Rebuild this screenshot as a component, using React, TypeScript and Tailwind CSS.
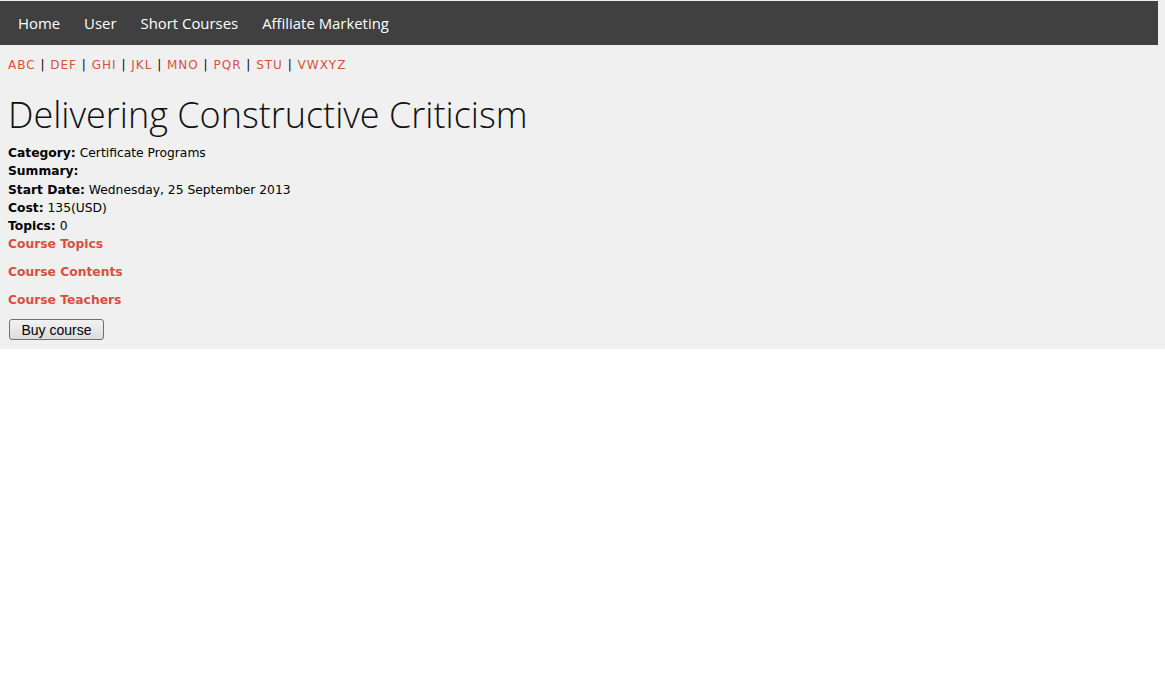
import React from 'react';

const letters = ['ABC', 'DEF', 'GHI', 'JKL', 'MNO', 'PQR', 'STU', 'VWXYZ'];
const navItems = ['Home', 'User', 'Short Courses', 'Affiliate Marketing'];

export default function App() {
  return (
    <div className="min-h-[684px] bg-white">
      <div className="bg-[#f0f0f0] pt-px pb-[9px] font-['DejaVu_Sans',Verdana,sans-serif] text-[12.3px] text-black">
        {/* top nav */}
        <nav className="mr-[7px] flex h-[44px] items-center bg-[#404040] px-[6px] font-['Open_Sans',sans-serif] text-[14.9px] text-white">
          {navItems.map((item) => (
            <a key={item} href="#" className="px-3">
              {item}
            </a>
          ))}
        </nav>

        <div className="px-2">
          {/* alphabet index */}
          <div className="mt-[11px] text-[12px] tracking-[1px] leading-[18px]">
            {letters.map((l, i) => (
              <React.Fragment key={l}>
                {i > 0 && <span> | </span>}
                <a href="#" className="text-[#d4513f]">{l}</a>
              </React.Fragment>
            ))}
          </div>

          <h1 className="mt-[16px] mb-[4px] font-['Open_Sans',sans-serif] text-[36px] font-light leading-[50px] text-[#111]">
            Delivering Constructive Criticism
          </h1>

          <div className="leading-[18.3px]">
            <div><b>Category:</b> Certificate Programs</div>
            <div><b>Summary:</b></div>
            <div><b>Start Date:</b> Wednesday, 25 September 2013</div>
            <div><b>Cost:</b> 135(USD)</div>
            <div><b>Topics:</b> 0</div>
          </div>

          <div className="flex flex-col gap-[10px] font-bold text-[#d4513f] leading-[18px]">
            <a href="#">Course Topics</a>
            <a href="#">Course Contents</a>
            <a href="#">Course Teachers</a>
          </div>

          <button className="mt-[10px] ml-px h-[21px] w-[95px] rounded-[3px] border border-[#707070] bg-gradient-to-b from-[#f2f2f2] to-[#dcdcdc] font-['Liberation_Sans',Arial,sans-serif] text-[14px] leading-none text-black">
            Buy course
          </button>
        </div>
      </div>
    </div>
  );
}
